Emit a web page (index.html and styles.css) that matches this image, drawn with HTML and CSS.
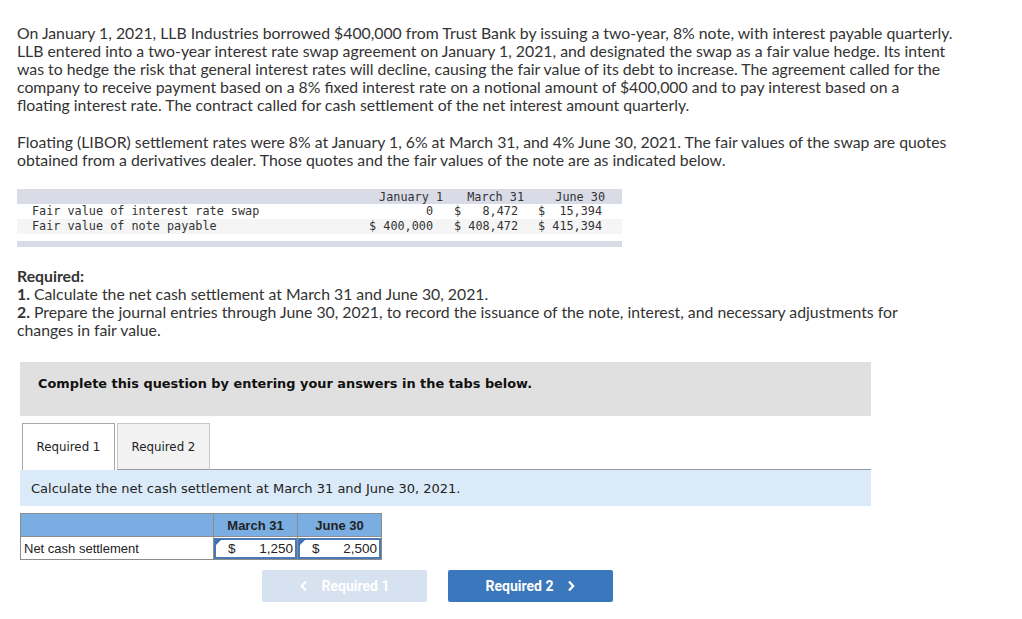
FILE: index.html
```html
<!DOCTYPE html>
<html>
<head>
<meta charset="utf-8">
<link rel="stylesheet" href="styles.css">
</head>
<body>
<div class="page">
  <p class="para first">On January 1, 2021, LLB Industries borrowed $400,000 from Trust Bank by issuing a two-year, 8% note, with interest payable quarterly. LLB entered into a two-year interest rate swap agreement on January 1, 2021, and designated the swap as a fair value hedge. Its intent was to hedge the risk that general interest rates will decline, causing the fair value of its debt to increase. The agreement called for the company to receive payment based on a 8% fixed interest rate on a notional amount of $400,000 and to pay interest based on a floating interest rate. The contract called for cash settlement of the net interest amount quarterly.</p>
  <p class="para second">Floating (LIBOR) settlement rates were 8% at January 1, 6% at March 31, and 4% June 30, 2021. The fair values of the swap are quotes obtained from a derivatives dealer. Those quotes and the fair values of the note are as indicated below.</p>

  <div class="fv">
    <div class="fv-row fv-head">
      <span class="lbl"></span>
      <span class="c c1">January 1</span>
      <span class="c c2">March 31</span>
      <span class="c c3">June 30</span>
    </div>
    <div class="fv-row">
      <span class="lbl">Fair value of interest rate swap</span>
      <span class="c c1 v">0</span>
      <span class="c c2 v">$&nbsp;&nbsp;&nbsp;8,472</span>
      <span class="c c3 v">$&nbsp;&nbsp;15,394</span>
    </div>
    <div class="fv-row alt">
      <span class="lbl">Fair value of note payable</span>
      <span class="c c1 v">$&nbsp;400,000</span>
      <span class="c c2 v">$&nbsp;408,472</span>
      <span class="c c3 v">$&nbsp;415,394</span>
    </div>
    <div class="fv-foot"></div>
  </div>

  <div class="req">
    <div class="req-title">Required:</div>
    <div><b>1.</b> Calculate the net cash settlement at March 31 and June 30, 2021.</div>
    <div><b>2.</b> Prepare the journal entries through June 30, 2021, to record the issuance of the note, interest, and necessary adjustments for changes in fair value.</div>
  </div>

  <div class="work">
    <div class="notice">Complete this question by entering your answers in the tabs below.</div>

    <div class="tabs">
      <div class="tab active">Required 1</div>
      <div class="tab">Required 2</div>
      <div class="tab-rest"></div>
    </div>
    <div class="instr">Calculate the net cash settlement at March 31 and June 30, 2021.</div>

    <table class="ans">
      <tr class="ans-head">
        <th class="ans-lbl"></th>
        <th class="ans-col">March 31</th>
        <th class="ans-col">June 30</th>
      </tr>
      <tr>
        <td class="ans-lbl">Net cash settlement</td>
        <td class="ans-in"><div class="inp"><span class="tri"></span><span>$</span><span>1,250</span></div></td>
        <td class="ans-in"><div class="inp"><span class="tri"></span><span>$</span><span>2,500</span></div></td>
      </tr>
    </table>

    <div class="nav">
      <button class="btn prev"><svg class="chev" width="8" height="12" viewBox="0 0 8 12"><path d="M6 1.5 L1.8 6 L6 10.5" fill="none" stroke="#fff" stroke-width="2.2"/></svg><span>Required 1</span></button>
      <button class="btn next"><span>Required 2</span><svg class="chev" width="8" height="12" viewBox="0 0 8 12"><path d="M2 1.5 L6.2 6 L2 10.5" fill="none" stroke="#fff" stroke-width="2.2"/></svg></button>
    </div>
  </div>
</div>
</body>
</html>
```
FILE: styles.css
```css
html, body { margin: 0; padding: 0; background: #fff; }
.page { padding: 24px 0 0 17px; width: 950px; }

.para {
  font-family: Lato, "Open Sans", sans-serif;
  font-size: 15.8px;
  line-height: 18px;
  color: #333;
  margin: 0;
}
.first { width: 937px; }
.second { margin-top: 19px; width: 937px; }

.fv {
  margin-top: 20px;
  width: 605px;
  font-family: "DejaVu Sans Mono", monospace;
  font-size: 11.8px;
  color: #333;
}
.fv-row { display: flex; height: 15px; line-height: 15px; }
.fv-head { background: #d9dce6; line-height: 17px; }
.fv-row.alt { background: #f5f5f5; }
.lbl { width: 348px; box-sizing: border-box; padding-left: 15px; white-space: pre; }
.c { text-align: right; white-space: pre; width: 80px; box-sizing: border-box; }
.c1 { padding-right: 2px; }
.c2 { padding-right: 1px; }
.c3 { padding-right: 0; }
.c1.v { padding-right: 12px; }
.c2.v { padding-right: 7px; }
.c3.v { padding-right: 3px; }
.fv-foot { margin-top: 7px; height: 6px; background: #d9dce6; }

.req {
  margin-top: 20px;
  font-family: Lato, "Open Sans", sans-serif;
  font-size: 15.8px;
  line-height: 18px;
  color: #333;
  width: 937px;
}
.req-title { font-weight: 700; }
.req b { font-weight: 700; }

.work { margin-left: 3px; width: 851px; }
.notice {
  margin-top: 23px;
  height: 54px;
  box-sizing: border-box;
  padding: 14px 18px 0;
  background: #e0e0e0;
  font-family: "DejaVu Sans", Verdana, sans-serif;
  font-weight: 700;
  font-size: 12.9px;
  line-height: 16px;
  color: #111;
}

.tabs { display: flex; margin-top: 7px; height: 47px; }
.tab {
  box-sizing: border-box;
  height: 47px;
  display: flex;
  align-items: center;
  justify-content: center;
  font-family: "DejaVu Sans", Verdana, sans-serif;
  font-size: 11.8px;
  color: #222;
}
.tab.active {
  margin-left: 2px;
  width: 93px;
  border: 1px solid #a8a8a8;
  border-bottom: none;
  background: #fff;
}
.tab:not(.active) {
  margin-left: 2px;
  width: 93px;
  border: 1px solid #c8c8c8;
  border-bottom: 1px solid #999;
  background: #f2f2f2;
}
.tab-rest { flex: 1; border-bottom: 1px solid #999; }

.instr {
  height: 36px;
  display: flex;
  align-items: center;
  padding-left: 11px;
  background: #dbeaf8;
  font-family: "DejaVu Sans", Verdana, sans-serif;
  font-size: 13px;
  color: #222;
}

.ans {
  margin-top: 7px;
  border-collapse: collapse;
  font-family: "Liberation Sans", Arial, sans-serif;
  font-size: 13px;
  color: #222;
}
.ans th, .ans td { border: 1px solid #8c8c8c; padding: 0; height: 22px; }
.ans-head th { background: #7aade2; font-weight: 700; font-size: 13px; }
.ans-lbl { width: 193px; text-align: left; padding-left: 3px !important; box-sizing: border-box; }
.ans-col { width: 83px; text-align: center; }
.ans-in { position: relative; }
.inp {
  position: relative;
  height: 21px;
  border: 2px solid #4a79b5;
  box-sizing: border-box;
  display: flex;
  justify-content: space-between;
  align-items: center;
  padding: 0 2px 0 12px;
  font-size: 13.5px;
  background: #fff;
}
.tri {
  position: absolute;
  left: -1px;
  top: -1px;
  width: 0; height: 0;
  border-top: 7px solid #3a72b8;
  border-right: 7px solid transparent;
}

.nav { display: flex; gap: 21px; margin-top: 10px; padding-left: 242px; }
.btn {
  width: 165px;
  height: 32px;
  border: none;
  border-radius: 2px;
  font-family: Roboto, "Liberation Sans", sans-serif;
  font-weight: 700;
  font-size: 14px;
  color: #fff;
  display: flex;
  align-items: center;
  justify-content: center;
  gap: 14px;
  padding: 0;
}
.btn.prev { background: #d6e2f0; }
.btn.next { background: #3a77bc; }
.chev { display: block; }
```
